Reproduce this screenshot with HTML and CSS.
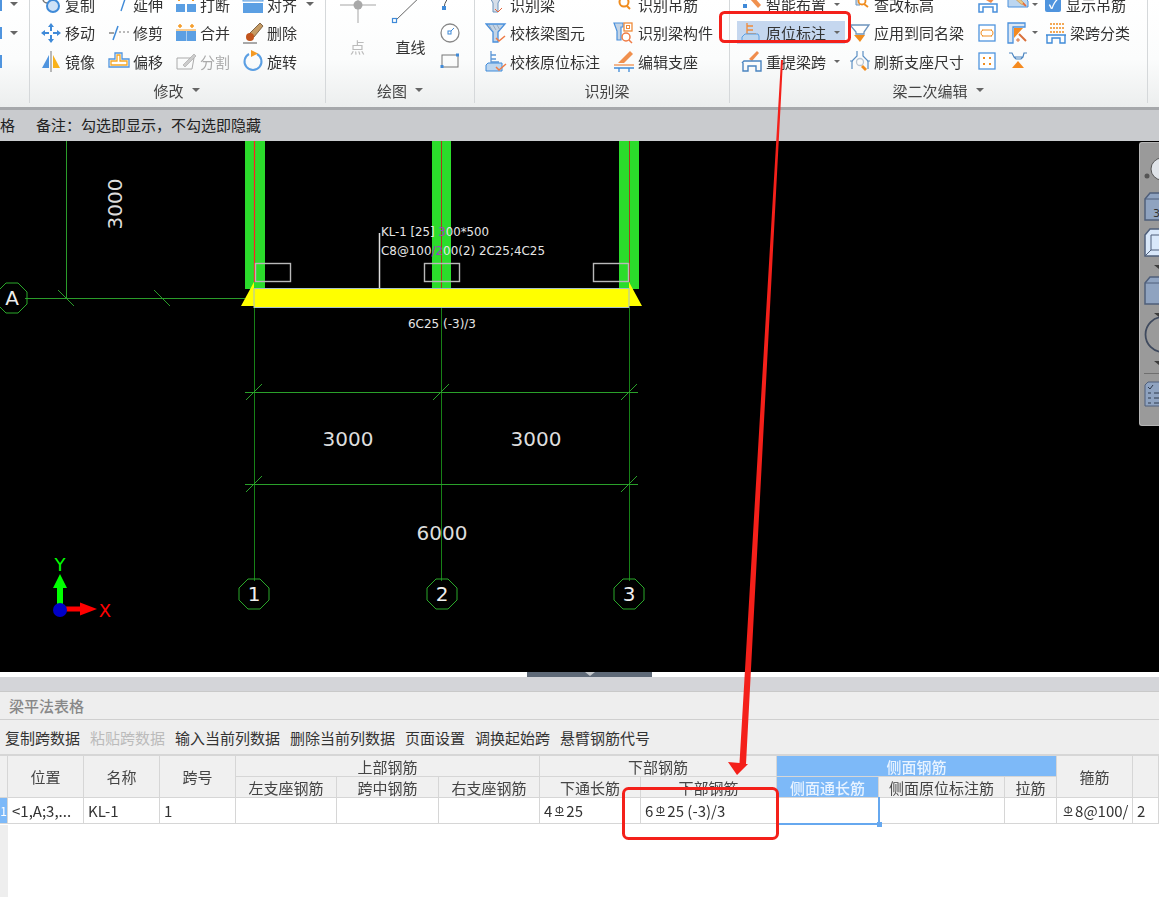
FILE: index.html
```html
<!DOCTYPE html>
<html lang="zh-CN">
<head>
<meta charset="utf-8">
<title>梁平法表格</title>
<link rel="stylesheet" href="styles.css">
</head>
<body>
<div class="page">
  <header class="ribbon">
    <section class="group group-edge">
      <div class="edge-items"><span class="edge-item"><i class="caret"></i></span><span class="edge-item"><i class="caret"></i></span><span class="edge-item"></span></div>
    </section>

    <section class="group group-modify">
      <div class="tools cols-modify">
        <div class="tool"><svg class="ico" viewBox="0 0 22 22"><rect x="3" y="1" width="9" height="9" rx="4" fill="none" stroke="#777" stroke-width="1.5"/><circle cx="13" cy="13" r="6" fill="#cfe2f7" stroke="#3f8ad8" stroke-width="2"/></svg><span>复制</span></div>
        <div class="tool"><svg class="ico" viewBox="0 0 22 22"><path d="M2 6h10" stroke="#777" stroke-dasharray="2 2" fill="none"/><path d="M14 6h6M17 6l-4 12" stroke="#3f8ad8" stroke-width="1.4" fill="none"/></svg><span>延伸</span></div>
        <div class="tool"><svg class="ico" viewBox="0 0 22 22"><rect x="1" y="11" width="9" height="8" fill="#5b9fe3"/><rect x="12" y="11" width="9" height="8" fill="#5b9fe3"/><path d="M4 3v5M18 3v5" stroke="#f59a23" stroke-width="2"/></svg><span>打断</span></div>
        <div class="tool"><svg class="ico" viewBox="0 0 22 22"><rect x="1" y="2" width="20" height="6" fill="#bcd5f0" stroke="#5b9fe3"/><rect x="1" y="10" width="20" height="10" fill="#5b9fe3"/></svg><span>对齐</span><i class="caret"></i></div>

        <div class="tool"><svg class="ico" viewBox="0 0 22 22"><path d="M11 1l3 4h-2v4h-2V5H8zM11 21l-3-4h2v-4h2v4h2zM1 11l4-3v2h4v2H5v2zM21 11l-4 3v-2h-4v-2h4V8z" fill="#3f8ad8"/></svg><span>移动</span></div>
        <div class="tool"><svg class="ico" viewBox="0 0 22 22"><path d="M1 11h5" stroke="#666" stroke-width="1.2"/><path d="M5 18L10 4" stroke="#3f8ad8" stroke-width="1.5"/><path d="M11 10h10" stroke="#777" stroke-dasharray="2 2"/></svg><span>修剪</span></div>
        <div class="tool"><svg class="ico" viewBox="0 0 22 22"><path d="M3 4h4M5 2v4M15 4h4M17 2v4" stroke="#f59a23" stroke-width="1.5"/><rect x="1" y="9" width="10" height="10" fill="#5b9fe3"/><rect x="11.500" y="9" width="9.500" height="10" fill="#5b9fe3"/><path d="M1 8h20" stroke="#f59a23" stroke-width="1"/></svg><span>合并</span></div>
        <div class="tool"><svg class="ico" viewBox="0 0 22 22"><path d="M18 1l3 3-9 11-5-3z" fill="#c49a63" stroke="#6b4d2c" stroke-width=".8"/><circle cx="8" cy="15" r="4" fill="#c2541c"/><path d="M1 21h14" stroke="#555"/></svg><span>删除</span></div>

        <div class="tool"><svg class="ico" viewBox="0 0 22 22"><path d="M9 5v13H2z" fill="#4f94de"/><path d="M13 5v13h7z" fill="#f9b21a"/><path d="M11 1v21" stroke="#777"/></svg><span>镜像</span></div>
        <div class="tool"><svg class="ico" viewBox="0 0 22 22"><path d="M7 3h7v6h7v8H1V9h6z" fill="#fff" stroke="#4f94de" stroke-width="1.3"/><path d="M9 5h3v6h7v4H3v-4h6z" fill="none" stroke="#f5a623" stroke-width="1.3"/></svg><span>偏移</span></div>
        <div class="tool tool-off"><svg class="ico" viewBox="0 0 22 22"><path d="M2 8h17l-2 11H2z" fill="none" stroke="#aaa"/><path d="M8 15L19 4l2 2-11 11z" fill="#ccc" stroke="#aaa" stroke-width=".7"/></svg><span>分割</span></div>
        <div class="tool"><svg class="ico" viewBox="0 0 22 22"><path d="M7 4a8.500 8.500 0 1 0 8 0" fill="none" stroke="#5b9fe3" stroke-width="2"/><path d="M9 0l7 3.500-7 3.500z" fill="#f59a23"/></svg><span>旋转</span></div>
      </div>
      <div class="group-label">修改<i class="caret"></i></div>
    </section>

    <section class="group group-draw">
      <div class="draw-body">
        <div class="big big-off"><svg class="big-ico" viewBox="0 0 40 40"><path d="M2 13h36M20 0v31" stroke="#c4c4c4" stroke-width="1.500"/><circle cx="20" cy="13" r="4.500" fill="#a8a8a8"/></svg><span>点</span></div>
        <div class="big"><svg class="big-ico" viewBox="0 0 40 40"><path d="M4 29L34 0" stroke="#666"/><rect x="1.500" y="26.500" width="4" height="4" fill="#fff" stroke="#3f8ad8" stroke-width="1.200"/></svg><span>直线</span></div>
        <div class="draw-small">
          <svg class="ico" viewBox="0 0 22 22"><path d="M5 15Q6 5 14 3" fill="none" stroke="#555"/><rect x="3" y="13" width="4" height="4" fill="#3f8ad8"/></svg>
          <svg class="ico" viewBox="0 0 22 22"><circle cx="11" cy="11" r="9" fill="#fff" stroke="#888" stroke-width="1.300"/><rect x="9" y="9" width="3" height="3" fill="none" stroke="#3f8ad8"/><path d="M12 9l3-3" stroke="#3f8ad8"/></svg>
          <svg class="ico" viewBox="0 0 22 22"><rect x="3" y="5" width="16" height="12" fill="none" stroke="#777"/><rect x="1.500" y="15" width="3" height="3" fill="#3f8ad8"/><rect x="17" y="3.500" width="3" height="3" fill="#3f8ad8"/></svg>
        </div>
      </div>
      <div class="group-label">绘图<i class="caret"></i></div>
    </section>

    <section class="group group-detect">
      <div class="tools cols-detect">
        <div class="tool"><svg class="ico" viewBox="0 0 22 22"><path d="M3 1h15l-5 9v9H8v-9z" fill="#d6dee8" stroke="#6d94bd"/><path d="M10 16l3 3 4-4" stroke="#e8643a" fill="none"/></svg><span>识别梁</span></div>
        <div class="tool"><svg class="ico" viewBox="0 0 22 22"><circle cx="11" cy="9" r="4.500" fill="none" stroke="#f08c1e" stroke-width="2"/><path d="M14 13l3 3" stroke="#f08c1e" stroke-width="2"/></svg><span>识别吊筋</span></div>
        <div class="tool"><svg class="ico" viewBox="0 0 22 22"><path d="M1 2h19l-7 8v10H8V10z" fill="#c3d4e6" stroke="#4a90dc" stroke-width="1.300"/><path d="M4 3l3 5M8 3l3 5M12 3l3 5" stroke="#9aa9bb"/><path d="M11 16l3 3 6-5" stroke="#ef7b45" stroke-width="1.500" fill="none"/></svg><span>校核梁图元</span></div>
        <div class="tool"><svg class="ico" viewBox="0 0 22 22"><path d="M1 1h9v4H8v13H4V9z" fill="#c3d4e6" stroke="#4a90dc" stroke-width="1.200"/><rect x="11" y="1" width="8" height="8" fill="#fff" stroke="#ef8a3a" stroke-width="1.300"/><rect x="13.500" y="3.500" width="3" height="3" fill="none" stroke="#ef8a3a"/><circle cx="13" cy="15" r="4" fill="#fff" stroke="#ef7b45" stroke-width="1.500"/><path d="M16 18l3 3" stroke="#ef7b45" stroke-width="1.500"/></svg><span>识别梁构件</span></div>
        <div class="tool"><svg class="ico" viewBox="0 0 22 22"><path d="M6 1v11h8M6 5h5M6 9h5" stroke="#5c96d6" stroke-width="1.300" fill="none"/><path d="M1 15l2-2h14v8H1z" fill="#bcd6f0" stroke="#3f8ad8"/><path d="M11 17l3 3 7-6" stroke="#ef7b45" stroke-width="1.500" fill="none"/></svg><span>校核原位标注</span></div>
        <div class="tool"><svg class="ico" viewBox="0 0 22 22"><path d="M17 1l3 3-9 9H5z" fill="#f0904e"/><path d="M1 15h20" stroke="#f0904e" stroke-width="1.300"/><path d="M1 18h20M6 18v4M16 18v4" stroke="#3f8ad8" stroke-width="1.300"/></svg><span>编辑支座</span></div>
      </div>
      <div class="group-label">识别梁</div>
    </section>

    <section class="group group-beam">
      <div class="tools cols-beam">
        <div class="tool"><svg class="ico" viewBox="0 0 22 22"><path d="M12 3l8 9-3 3-8-9z" fill="#f0904e"/><path d="M2 4l3 3M15 3l4-2" stroke="#3f8ad8" stroke-width="1.500"/><rect x="2" y="11" width="4" height="4" fill="#3f8ad8"/></svg><span>智能布置</span><i class="caret small"></i></div>
        <div class="tool"><svg class="ico" viewBox="0 0 22 22"><path d="M2 1h13l-4 6v5H7V7z" fill="#cfdbe8" stroke="#6d94bd"/><circle cx="13" cy="8" r="3.500" fill="#fff" stroke="#f08c1e" stroke-width="1.800"/><path d="M15 11l4 3" stroke="#f08c1e" stroke-width="1.800"/></svg><span>查改标高</span></div>
        <div class="tool"><svg class="ico" viewBox="0 0 22 22"><path d="M15 0l4 3-6 7-5-3z" fill="#f08c4c"/><path d="M18 1l3 3-3 3-3-3z" fill="#777"/><path d="M1 11h18v8h-4v-5H5v5H1z" fill="#fff" stroke="#4a90dc" stroke-width="1.500"/></svg></div>
        <div class="tool"><svg class="ico" viewBox="0 0 22 22"><path d="M1 2h14l6 6v6H1z" fill="#bcd6f0" stroke="#4a90dc"/><path d="M7 1l9 8 3 4-5-2-9-8z" fill="#e9c98a" stroke="#c68b3a" stroke-width=".6"/><path d="M16 10l3 3" stroke="#e8643a" stroke-width="1.500"/></svg><i class="caret small"></i></div>
        <div class="tool tool-check"><span class="check">✓</span><span>显示吊筋</span></div>

        <div class="tool tool-active"><svg class="ico" viewBox="0 0 22 22"><path d="M6 1v11h9M6 4h6M6 8h6" stroke="#ef8a3a" stroke-width="1.300" fill="none"/><path d="M1 15l3-3h13l1 2v6H1z" fill="#bcd6f0" stroke="#5b9fe3"/></svg><span>原位标注</span><i class="caret small"></i></div>
        <div class="tool"><svg class="ico" viewBox="0 0 22 22"><path d="M1 3h19l-5 7v2H7v-2z" fill="#fff" stroke="#6d94bd" stroke-width="1.300"/><path d="M5 13h11l-5 7z" fill="#f08c1e"/></svg><span>应用到同名梁</span></div>
        <div class="tool"><svg class="ico small-ico" viewBox="0 0 18 18"><rect x="1" y="1" width="16" height="16" fill="#fff" stroke="#4f94de" stroke-width="1.300"/><path d="M4 6h10M4 12h10M3 9a3 3 0 0 1 2-3M15 9a3 3 0 0 0-2-3M3 9a3 3 0 0 0 2 3M15 9a3 3 0 0 1-2 3" stroke="#f08c1e" fill="none"/></svg></div>
        <div class="tool"><svg class="ico" viewBox="0 0 22 22"><path d="M1 1h17v4H6v16H1z" fill="#dbe7f4" stroke="#4a90dc" stroke-width="1.300"/><path d="M7 6h9l-9 10z" fill="#f58a1f"/><path d="M12 12l7 7" stroke="#d9703a" stroke-width="2"/><path d="M9 18h4M11 16v4" stroke="#d9703a"/></svg><i class="caret small"></i></div>
        <div class="tool"><svg class="ico" viewBox="0 0 22 22"><path d="M5 2h14M5 6h14M5 10h14" stroke="#f08c1e" stroke-dasharray="2 1" stroke-width="1.600"/><path d="M1 13h20M2 13v8h5v-5h8v5h5v-8" stroke="#3f8ad8" stroke-width="1.400" fill="none"/></svg><span>梁跨分类</span></div>

        <div class="tool"><svg class="ico" viewBox="0 0 22 22"><path d="M16 1l2 2-7 8-3-2z" fill="#f08c4c"/><path d="M1 13l2-2h17v2M2 13v8h5v-5h8v5h5v-8" stroke="#4a84c0" stroke-width="1.400" fill="none"/></svg><span>重提梁跨</span><i class="caret small"></i></div>
        <div class="tool"><svg class="ico" viewBox="0 0 22 22"><path d="M8 1v5L3 11v8M14 1v5l5 5v8M1 11h3M18 11h3" stroke="#5b8fc4" stroke-width="1.200" fill="none"/><circle cx="11" cy="12" r="3.500" fill="none" stroke="#b9c6d4" stroke-width="1.300"/><path d="M14 15l4 4-2 2-4-4z" fill="#f08c1e"/></svg><span>刷新支座尺寸</span></div>
        <div class="tool"><svg class="ico small-ico" viewBox="0 0 18 18"><rect x="1" y="1" width="16" height="16" fill="#fff" stroke="#4f94de" stroke-width="1.300"/><path d="M5 5h2v2H5zM11 5h2v2h-2zM5 11h2v2H5zM11 11h2v2h-2z" fill="#f08c1e"/></svg></div>
        <div class="tool"><svg class="ico" viewBox="0 0 22 22"><path d="M2 3h3l2 4h9l1-4h3M7 7l2 2h5l2-2" stroke="#4a84c0" stroke-width="1.200" fill="none"/><path d="M11 11l6 7H5z" fill="#f58a1f"/></svg></div>
        <div class="tool"></div>
      </div>
      <div class="group-label">梁二次编辑<i class="caret"></i></div>
    </section>
    <section class="group group-end"></section>
  </header>

  <div class="note-bar"><span>格</span><span>备注：勾选即显示，不勾选即隐藏</span></div>

  <main class="viewport">
    <svg class="cad" viewBox="0 141 1159 531" width="1159" height="531">
      <g class="grid-line">
        <path d="M66.500 141V298.500M25 298.500H245"/>
        <path d="M58 290l16 16M154 290l16 16" />
      </g>
      <g class="col-fill">
        <rect x="245" y="141" width="20" height="148"/>
        <rect x="432" y="141" width="19" height="148"/>
        <rect x="619" y="141" width="20" height="148"/>
      </g>
      <path d="M254.500 141V282" stroke="#f22" stroke-width="1.200"/>
      <path d="M441.500 141V288M629.500 141V282" stroke="#a83a1c" stroke-width="1"/>
      <g class="axis-line">
        <path class="axis-v" d="M254.500 308V581M441.500 308V581M629.500 308V581"/>
        <path d="M245 392.500H638M245 484.500H638"/>
        <path d="M246 400l16-16M433 400l16-16M621 400l16-16M246 492l16-16M621 492l16-16"/>
      </g>
      <g class="support">
        <rect x="255.500" y="263.500" width="35" height="18"/>
        <rect x="424.500" y="263.500" width="35" height="18"/>
        <rect x="593.500" y="263.500" width="35" height="18"/>
      </g>
      <path d="M379.500 233V288" stroke="#ddd" stroke-width="1.500"/>
      <path d="M254 282L241 306H254zM629 282L642 306H629z" fill="#ff0"/>
      <rect x="254" y="288.500" width="375" height="19" fill="#ff0" stroke="#a8c0c8"/>
      <text class="t-small" x="381" y="236" textLength="108" lengthAdjust="spacingAndGlyphs">KL-1 [25] <tspan fill="#a040c0">3</tspan>00*500</text>
      <text class="t-small" x="381" y="255" textLength="164" lengthAdjust="spacingAndGlyphs">C8@100<tspan fill="#a040c0">/2</tspan>00(2) 2C25;4C25</text>
      <text class="t-small" x="408" y="328" textLength="68" lengthAdjust="spacingAndGlyphs">6C25 (-3)/3</text>
      <text class="t-dim" transform="translate(122 204) rotate(-90)" text-anchor="middle">3000</text>
      <text class="t-dim" x="348" y="446" text-anchor="middle">3000</text>
      <text class="t-dim" x="536" y="446" text-anchor="middle">3000</text>
      <text class="t-dim" x="442" y="540" text-anchor="middle">6000</text>
      <g class="octa">
        <path d="M6 283l12 0 9 9v12l-9 9H6l-9-9v-12z"/>
        <path d="M248 579h12l9 9v12l-9 9h-12l-9-9v-12z"/>
        <path d="M436 579h12l9 9v12l-9 9h-12l-9-9v-12z"/>
        <path d="M623 579h12l9 9v12l-9 9h-12l-9-9v-12z"/>
      </g>
      <text class="t-axis" x="12" y="305" text-anchor="middle">A</text>
      <text class="t-axis" x="254" y="601" text-anchor="middle">1</text>
      <text class="t-axis" x="442" y="601" text-anchor="middle">2</text>
      <text class="t-axis" x="629" y="601" text-anchor="middle">3</text>
      <path d="M57 606V588h-4l7-14 7 14h-4v18z" fill="#0f0"/>
      <path d="M62 606.500h18v-4l17 6.500-17 6.500v-4H62z" fill="#f00"/>
      <circle cx="60" cy="610" r="7" fill="#0000c8"/>
      <text class="t-y" x="60" y="571" text-anchor="middle">Y</text>
      <text class="t-x" x="105" y="617" text-anchor="middle">X</text>
    </svg>
    <aside class="side-tools">
      <svg class="side-ico ball" viewBox="0 0 24 22"><circle cx="18" cy="11" r="11" fill="#dfe3e8" stroke="#555"/><circle cx="3" cy="18" r="2.500" fill="#555"/></svg>
      <svg class="side-ico cube first" viewBox="0 0 24 29"><path d="M1 7L6 1h18v27H1z" fill="#8fa3c0" stroke="#4f5f7a" stroke-width="1.500"/><path d="M1 7h23" stroke="#4f5f7a"/><text class="side-num" x="9" y="25">3</text></svg>
      <svg class="side-ico cube" viewBox="0 0 24 29"><path d="M1 7L6 1h18v27H1z" fill="#d9e8fa" stroke="#4f5f7a" stroke-width="1.500"/><path d="M7 7h17M7 7v15h17M7 22l-6 6" stroke="#4f5f7a" fill="none"/></svg>
      <i class="side-caret"></i>
      <svg class="side-ico cube after-caret" viewBox="0 0 24 29"><path d="M1 7L6 1h18v27H1z" fill="#8fa3c0" stroke="#4f5f7a" stroke-width="1.500"/><path d="M1 7h23" stroke="#4f5f7a"/></svg>
      <i class="side-caret"></i>
      <svg class="side-ico ring" viewBox="0 0 24 37"><circle cx="19" cy="18.500" r="17.500" fill="none" stroke="#3f4a5e" stroke-width="1.800"/></svg>
      <i class="side-caret"></i>
      <hr class="side-rule">
      <svg class="side-ico list" viewBox="0 0 24 26"><path d="M1 4l3-3h20v24H1z" fill="#8fa3c0" stroke="#4f5f7a"/><path d="M4 6l2 2 3-4M4 12h3M4 17h3M4 22h3M10 12h14M10 17h14M10 22h14" stroke="#2e3a4d" fill="none"/></svg>
    </aside>
  </main>

  <div class="splitter"><span class="handle"><i></i></span></div>
  <div class="band"></div>

  <section class="panel">
    <h2 class="panel-title">梁平法表格</h2>
    <nav class="panel-tools">
      <span>复制跨数据</span><span class="off">粘贴跨数据</span><span>输入当前列数据</span><span>删除当前列数据</span><span>页面设置</span><span>调换起始跨</span><span>悬臂钢筋代号</span>
    </nav>
    <div class="table-wrap">
      <table class="beam-table">
        <colgroup>
          <col class="w-8"><col class="w-76"><col class="w-76"><col class="w-76"><col class="w-101"><col class="w-102"><col class="w-101"><col class="w-101"><col class="w-136"><col class="w-102"><col class="w-126"><col class="w-52"><col class="w-76"><col class="w-26">
        </colgroup>
        <thead>
          <tr>
            <th rowspan="2"></th><th rowspan="2">位置</th><th rowspan="2">名称</th><th rowspan="2">跨号</th>
            <th colspan="3">上部钢筋</th><th colspan="2">下部钢筋</th><th colspan="3" class="hl">侧面钢筋</th>
            <th rowspan="2">箍筋</th><th rowspan="2"></th>
          </tr>
          <tr>
            <th>左支座钢筋</th><th>跨中钢筋</th><th>右支座钢筋</th><th>下通长筋</th><th>下部钢筋</th>
            <th class="hl">侧面通长筋</th><th>侧面原位标注筋</th><th>拉筋</th>
          </tr>
        </thead>
        <tbody>
          <tr>
            <td class="row-no">1</td><td>&lt;1,A;3,...</td><td>KL-1</td><td>1</td><td></td><td></td><td></td>
            <td>4<span class="rebar">Φ</span>25</td><td>6<span class="rebar">Φ</span>25 (-3)/3</td>
            <td class="selected"><i class="fill-handle"></i></td><td></td><td></td>
            <td><span class="rebar">Φ</span>8@100/</td><td>2</td>
          </tr>
        </tbody>
      </table>
      <div class="row-gutter"></div>
    </div>
  </section>

  <svg class="marks" viewBox="0 0 1159 897" width="1159" height="897">
    <rect x="720.500" y="12.500" width="129" height="29" rx="4"/>
    <rect x="623.500" y="788.500" width="154" height="50" rx="5"/>
    <path class="arrow" d="M781 60L783 60L746 764L748 764L737 775L728 762L739.500 763z"/>
  </svg>
</div>
</body>
</html>
```

FILE: styles.css
```css
* { box-sizing: border-box; }
html, body { margin: 0; padding: 0; background: #fff; }
body {
  font-family: "Noto Sans CJK SC", "Noto Sans", sans-serif;
  font-size: 15px;
  line-height: 1;
  color: #333;
}
.page {
  position: relative;
  width: 1159px;
  height: 897px;
  overflow: hidden;
  display: flex;
  flex-direction: column;
  filter: blur(0.35px);
}

/* ribbon */
.ribbon {
  flex: 0 0 110px;
  display: flex;
  overflow: hidden;
  padding-bottom: 4px;
  border-bottom: 3px solid #a6a8ab;
  background: linear-gradient(#fff 0, #fbfcfc 55%, #eceeee 100%);
}
.group {
  position: relative;
  display: flex;
  flex-direction: column;
  border-right: 1px solid #d5d8da;
  flex: none;
}
.group-edge { width: 30px; }
.group-modify { width: 296px; padding-left: 10px; }
.group-draw { width: 149px; }
.group-detect { width: 255px; padding-left: 10px; }
.group-beam { width: 418px; padding-left: 11px; }
.group-end { flex: 1; border-right: 0; }
.edge-items { margin-top: -10px; display: grid; grid-auto-rows: 28.5px; }
.edge-item { display: flex; align-items: center; justify-content: flex-end; padding-right: 11px; border-left: 2px solid #4f94de; border-image: linear-gradient(transparent 30%, #4f94de 30%, #4f94de 70%, transparent 70%) 1; }
.tools {
  margin-top: -10px;
  display: grid;
  grid-auto-rows: 28.5px;
}
.cols-modify { grid-template-columns: 68px 67px 67px 80px; }
.cols-detect { grid-template-columns: 128px 117px; }
.cols-beam { grid-template-columns: 108px 129px 29px 38px 103px; }
.tool { display: flex; align-items: center; gap: 3px; white-space: nowrap; }
.tool-off { color: #aaa; }
.tool-active { background: #c5d7ef; height: 23px; align-self: center; margin-left: -4px; padding-left: 4px; width: 108px; }
.ico { width: 22px; height: 22px; flex: none; }
.small-ico { width: 18px; height: 18px; }
.group-label {
  margin-top: auto;
  height: 26px;
  display: flex;
  align-items: center;
  justify-content: center;
  gap: 8px;
  color: #444;
}
.group-modify .group-label, .group-beam .group-label { padding-right: 12px; }
.caret {
  display: inline-block;
  width: 0;
  height: 0;
  margin-left: 6px;
  border-left: 4px solid transparent;
  border-right: 4px solid transparent;
  border-top: 4px solid #666;
}
.group-label .caret { margin-left: 0; }
.caret.small { border-left-width: 3px; border-right-width: 3px; border-top-width: 3px; margin-left: 5px; }
.ico + .caret.small { margin-left: 0; }
.check {
  width: 16px; height: 16px; border-radius: 2px;
  background: #4f94de; color: #fff; font-size: 12px; font-weight: 700;
  display: flex; align-items: center; justify-content: center; flex: none;
}
.tool-check { gap: 5px; }

.draw-body { display: flex; height: 76px; overflow: hidden; }
.big { width: 53px; flex: none; display: flex; flex-direction: column; align-items: center; gap: 7px; }
.big-off { color: #bbb; margin-left: 5px; }
.big-ico { width: 40px; height: 40px; margin-top: -8px; }
.draw-small { margin-left: 2px; margin-top: -10px; display: grid; grid-auto-rows: 28.5px; align-items: center; }

/* note bar */
.note-bar {
  flex: 0 0 31px;
  padding-bottom: 2px;
  background: #c9cbce;
  display: flex;
  align-items: center;
  gap: 21px;
  color: #222;
}

/* canvas */
.viewport { position: relative; flex: 0 0 531px; background: #000; overflow: hidden; }
.cad { display: block; }
.grid-line path { stroke: #2a9c2a; stroke-width: 1; fill: none; }
.col-fill rect { fill: #2bdc2b; }
.axis-line path { stroke: #2aa02a; stroke-width: 1; fill: none; }
.axis-line .axis-v { stroke: #178017; }
.support rect { fill: none; stroke: #b9b9b9; stroke-width: 1.4; }
.octa path { fill: none; stroke: #2aa82a; stroke-width: 1; }
.t-small { font-family: "DejaVu Sans", sans-serif; font-size: 12px; fill: #e6e6e6; }
.t-dim { font-family: "DejaVu Sans", sans-serif; font-size: 20px; fill: #ddd; }
.t-axis { font-family: "DejaVu Sans", sans-serif; font-size: 20px; fill: #eee; }
.t-y { font-family: "DejaVu Sans", sans-serif; font-size: 18px; fill: #0f0; }
.t-x { font-family: "DejaVu Sans", sans-serif; font-size: 18px; fill: #f00; }
.side-tools {
  position: absolute;
  left: 1139px;
  top: 1px;
  width: 20px;
  height: 284px;
  padding: 15px 0 0 4px;
  background: #9a9a9a;
  border: 1px solid #b5b5b5;
  border-right: 0;
  border-radius: 3px 0 0 3px;
  display: flex;
  flex-direction: column;
  overflow: hidden;
}
.side-ico { width: 24px; flex: none; }
.ball { height: 22px; }
.cube { height: 29px; margin-top: 7px; }
.cube.first { margin-top: 12px; }
.cube.after-caret { margin-top: 7px; }
.ring { height: 37px; margin-top: 0; }
.list { height: 26px; margin-top: 7px; }
.side-num { font-size: 11px; fill: #333; font-family: "DejaVu Sans", sans-serif; }
.side-caret {
  flex: none;
  width: 0; height: 0; align-self: flex-end; margin: 8px 0 0;
  border-left: 5px solid transparent; border-right: 0; border-top: 4px solid #3c3c3c;
}
.side-ico + .side-caret + .ring { margin-top: -1px; }
.side-rule { flex: none; width: 100%; margin: 8px 0 0; border: 0; border-top: 1px solid #6f6f6f; }

/* lower part */
.splitter { flex: 0 0 5px; background: #fff; display: flex; }
.handle {
  margin-left: 527px;
  width: 125px;
  height: 5px;
  background: #5f6a78;
  display: flex;
  justify-content: center;
}
.handle i {
  width: 0; height: 0;
  border-left: 5px solid transparent; border-right: 5px solid transparent; border-top: 4px solid #c4c8cc;
}
.band { flex: 0 0 15px; background: #d4d5d9; border-bottom: 1px solid #c9c9c9; }
.panel { flex: 1; display: flex; flex-direction: column; background: #eee; min-height: 0; }
.panel-title {
  margin: 0;
  flex: 0 0 28px;
  padding-left: 9px;
  display: flex;
  align-items: center;
  font-size: 15px;
  font-weight: 500;
  color: #888;
  border-bottom: 1px solid #cfcfcf;
}
.panel-tools {
  flex: 0 0 35px;
  display: flex;
  align-items: center;
  gap: 10px;
  padding-left: 5px;
  color: #333;
  border-bottom: 1px solid #d6d6d6;
}
.panel-tools .off { color: #bbb; }
.table-wrap { flex: 1; background: #fff; position: relative; display: flex; flex-direction: column; min-height: 0; }
.beam-table { table-layout: fixed; width: 1159px; margin-left: -1px; border-collapse: collapse; flex: none; }
.w-8 { width: 8px; } .w-76 { width: 76px; } .w-101 { width: 101px; } .w-102 { width: 102px; }
.w-136 { width: 136px; } .w-126 { width: 126px; } .w-52 { width: 52px; } .w-26 { width: 26px; }
.beam-table th, .beam-table td { border: 1px solid #d6d6d6; padding: 0; overflow: hidden; white-space: nowrap; }
.beam-table th { height: 21px; background: #f0f0f0; font-weight: 400; color: #444; text-align: center; }
.beam-table th.hl { background: #7db9f8; color: #e8f3ff; font-weight: 500; }
.beam-table td { height: 26px; background: #fff; padding-left: 4px; color: #333; }
.beam-table td.row-no { background: #7db9f8; color: #fff; padding: 0; text-align: center; font-size: 12px; }
.beam-table td.selected {
  position: relative;
  overflow: visible;
  border: 0;
  border-right: 2px solid #66a8ef;
  border-bottom: 2px solid #66a8ef;
}
.fill-handle {
  position: absolute; right: -4px; bottom: -4px;
  width: 5px; height: 5px; background: #66a8ef;
}
.rebar {
  display: inline-block;
  width: 14px;
  text-align: center;
  font-size: 11px;
  line-height: 10px;
  vertical-align: 3px;
  text-decoration: underline;
}
.row-gutter { flex: 1; width: 8px; background: #eee; }

/* annotations */
.marks { position: absolute; left: 0; top: 0; pointer-events: none; }
.marks rect { fill: none; stroke: #f4201a; stroke-width: 3; }
.marks .arrow { fill: #f4201a; stroke: none; }
```
